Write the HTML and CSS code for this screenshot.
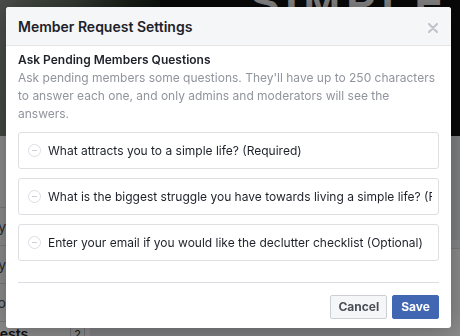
FILE: index.html
```html
<!DOCTYPE html>
<html>
    <head>
        <meta charset="utf-8">
        <title>Member Request Settings</title>
        <link rel="stylesheet" href="styles.css">
    </head>
    <body>
        <!-- page behind the dialog -->
        <div class="page">
            <div class="cover">
                <div class="plant"></div>
                <div class="cover-word">SIMPLE</div>
            </div>
            <div class="main">
                <div class="side">
                    <div class="side-row">Activity</div>
                    <div class="side-row">Privacy</div>
                    <div class="side-row">Info</div>
                    <div class="side-foot">Requests <span class="count">2</span></div>
                </div>
                <div class="feed">
                    <div class="feed-card">
                        <div class="feed-band"></div>
                        <div class="feed-title">Invite</div>
                    </div>
                </div>
            </div>
        </div>

        <div class="back"></div>

        <div class="modal">
            <div class="header">
                <h4>Member Request Settings</h4>
                <a class="btn-x" href="#">
                    <svg width="10" height="10" viewBox="0 0 10 10">
                        <path d="M1 1 L9 9 M9 1 L1 9" stroke="#bec2c9" stroke-width="2" stroke-linecap="round"/>
                    </svg>
                </a>
            </div>

            <div class="content">
                <h5>Ask Pending Members Questions</h5>
                <p class="desc">Ask pending members some questions. They'll have up to 250 characters to answer each one, and only admins and moderators will see the answers.</p>

                <div class="question">
                    <span class="minus"></span>
                    <span class="q-text">What attracts you to a simple life? (Required)</span>
                </div>
                <div class="question">
                    <span class="minus"></span>
                    <span class="q-text">What is the biggest struggle you have towards living a simple life? (Required)</span>
                </div>
                <div class="question">
                    <span class="minus"></span>
                    <span class="q-text">Enter your email if you would like the declutter checklist (Optional)</span>
                </div>

                <div class="foot">
                    <a class="btn cancel" href="#">Cancel</a>
                    <a class="btn save" href="#">Save</a>
                </div>
            </div>
        </div>
    </body>
</html>
```

FILE: styles.css
```css
body{
    margin: 0;
    font-family: Inter, "Liberation Sans", Arial, sans-serif;
    background: #e9ebee;
    overflow: hidden;
    height: 336px;
}
a{
    text-decoration: none;
    color: #333;
}
h4,h5,p,div{
    margin: 0; padding: 0;
}

/* page behind */
.page{
    height: 336px;
    overflow: hidden;
}
.cover{
    height: 136px;
    background: #111;
    display: flex;
    position: relative;
    overflow: hidden;
}
.plant{
    width: 160px;
    background: linear-gradient(100deg, #8a8f88 0%, #5f6a5c 40%, #2c3a2a 70%, #111 100%);
}
.cover-word{
    position: absolute;
    left: 250px;
    top: -22px;
    font-size: 44px;
    font-weight: bold;
    letter-spacing: 6px;
    color: #f0f0f0;
    font-family: "Liberation Sans", Arial, sans-serif;
}
.main{
    display: flex;
    gap: 12px;
}
.side{
    width: 200px;
    flex: none;
    background: #fff;
    margin-left: -110px;
    padding-top: 71px;
}
.side-row{
    height: 37px;
    line-height: 37px;
    border-top: 1px solid #dddfe2;
    font-size: 14px;
    color: #4b4f56;
    text-align: right;
    padding-right: 84px;
}
.side-foot{
    border-top: 1px solid #dddfe2;
    display: flex;
    justify-content: flex-end;
    align-items: center;
    padding: 4px 5px 0 0;
    line-height: 16px;
    font-size: 14px;
    font-weight: 600;
    color: #1d2129;
}
.count{
    margin-left: 42px;
    border: 1px solid #ccd0d5;
    padding: 0 3px;
    line-height: 14px;
    font-weight: normal;
    font-size: 11px;
}
.feed{
    flex: 1;
    display: flex;
    justify-content: flex-end;
}
.feed-card{
    width: 120px;
    margin-top: 104px;
    margin-right: -60px;
    background: #fff;
}
.feed-band{
    height: 8px;
    background: #f5f6f7;
    border-bottom: 1px solid #dddfe2;
}
.feed-title{
    padding: 24px 10px;
    font-weight: bold;
    font-size: 14px;
    color: #1d2129;
}

.back{
    background-color: rgba(0, 0, 0, 0.45);
    position: fixed;
    top: 0; left: 0; right: 0; bottom: 0;
}

/* dialog */
.modal{
    position: absolute;
    top: 7px;
    left: 6px;
    width: 445px;
    height: 321px;
    background: #fff;
    border-radius: 3px;
    overflow: hidden;
    box-shadow: 0 2px 26px rgba(0, 0, 0, .3);
}
.header{
    height: 38px;
    background: #f5f6f7;
    border-bottom: 1px solid #e5e5e5;
    display: flex;
    align-items: center;
    justify-content: space-between;
    padding: 0 13px 0 12px;
}
h4{
    font-size: 14px;
    color: #1d2129;
    font-weight: 600;
}
.btn-x{
    display: flex;
    margin-top: 3px;
}
.content{
    padding: 5px 12px 0 12px;
}
h5{
    font-size: 12px;
    line-height: 18px;
    color: #1d2129;
    font-weight: 600;
}
.desc{
    font-size: 12px;
    line-height: 18px;
    color: #90949c;
    margin-bottom: 9px;
}
.question{
    height: 35px;
    border: 1px solid #dddfe2;
    border-radius: 3px;
    display: flex;
    align-items: center;
    padding: 0 6px 0 9px;
    margin-bottom: 9px;
    overflow: hidden;
}
.minus{
    flex: none;
    width: 11px;
    height: 11px;
    border: 1px solid #dadde1;
    border-radius: 50%;
    position: relative;
    margin-right: 7px;
}
.minus:after{
    content: '';
    position: absolute;
    left: 3px;
    right: 3px;
    top: 5px;
    height: 1px;
    background: #ccd0d5;
}
.q-text{
    font-size: 12px;
    color: #1d2129;
    white-space: nowrap;
    overflow: hidden;
}
.foot{
    border-top: 1px solid #dadde1;
    margin-top: 21px;
    padding-top: 12px;
    display: flex;
    justify-content: flex-end;
    gap: 5px;
}
.btn{
    height: 22px;
    line-height: 22px;
    border: 1px solid;
    border-radius: 2px;
    font-size: 12px;
    font-weight: bold;
    padding: 0 7px;
}
.cancel{
    background: #f5f6f7;
    border-color: #ccd0d5;
    color: #4b4f56;
}
.save{
    background: #4267b2;
    border-color: #4267b2;
    color: #fff;
    padding: 0 8px;
}
```
